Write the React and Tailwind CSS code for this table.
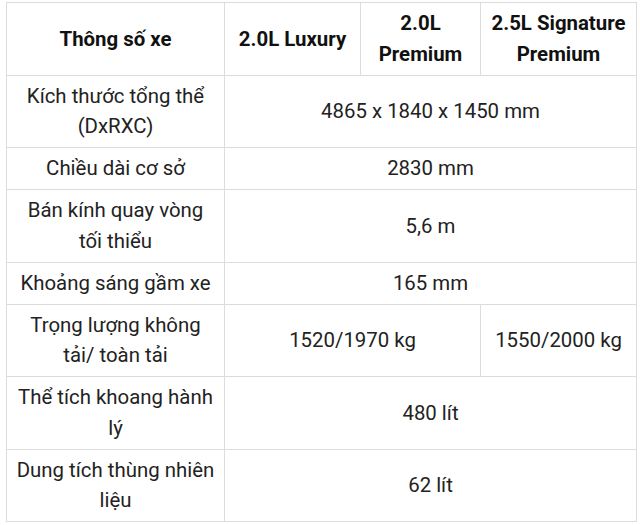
import React from "react";

/*
  Bảng thông số kỹ thuật xe
  Three trims, values span columns where they are shared.
*/

const rows = [
  { label: "Kích thước tổng thể (DxRXC)", values: [{ text: "4865 x 1840 x 1450 mm", span: 3 }] },
  { label: "Chiều dài cơ sở", values: [{ text: "2830 mm", span: 3 }] },
  { label: "Bán kính quay vòng tối thiểu", values: [{ text: "5,6 m", span: 3 }] },
  { label: "Khoảng sáng gầm xe", values: [{ text: "165 mm", span: 3 }] },
  {
    label: "Trọng lượng không tải/ toàn tải",
    values: [
      { text: "1520/1970 kg", span: 2 },
      { text: "1550/2000 kg", span: 1 },
    ],
  },
  { label: "Thể tích khoang hành lý", values: [{ text: "480 lít", span: 3 }] },
  { label: "Dung tích thùng nhiên liệu", values: [{ text: "62 lít", span: 3 }] },
];

const cell = "border border-[#dcdcdc] px-[7px] py-[5.25px] text-center align-middle";

export default function App() {
  return (
    <div
      className="min-h-screen bg-white pl-[6px] pt-[2px] text-[20.4px] leading-[30.5px] text-[#222]"
      style={{ fontFamily: "Roboto, 'Noto Sans', sans-serif" }}
    >
      <table className="w-[630px] table-fixed border-collapse">
        <colgroup>
          <col className="w-[218px]" />
          <col className="w-[136px]" />
          <col className="w-[120px]" />
          <col className="w-[156px]" />
        </colgroup>
        <thead>
          <tr>
            <th className={`${cell} font-bold text-[#111]`}>Thông số xe</th>
            <th className={`${cell} font-bold text-[#111]`}>2.0L Luxury</th>
            <th className={`${cell} font-bold text-[#111]`}>2.0L Premium</th>
            <th className={`${cell} font-bold text-[#111]`}>2.5L Signature Premium</th>
          </tr>
        </thead>
        <tbody>
          {rows.map((row) => (
            <tr key={row.label}>
              <td className={cell}>{row.label}</td>
              {row.values.map((v) => (
                <td key={v.text} colSpan={v.span} className={cell}>
                  {v.text}
                </td>
              ))}
            </tr>
          ))}
        </tbody>
      </table>
    </div>
  );
}
